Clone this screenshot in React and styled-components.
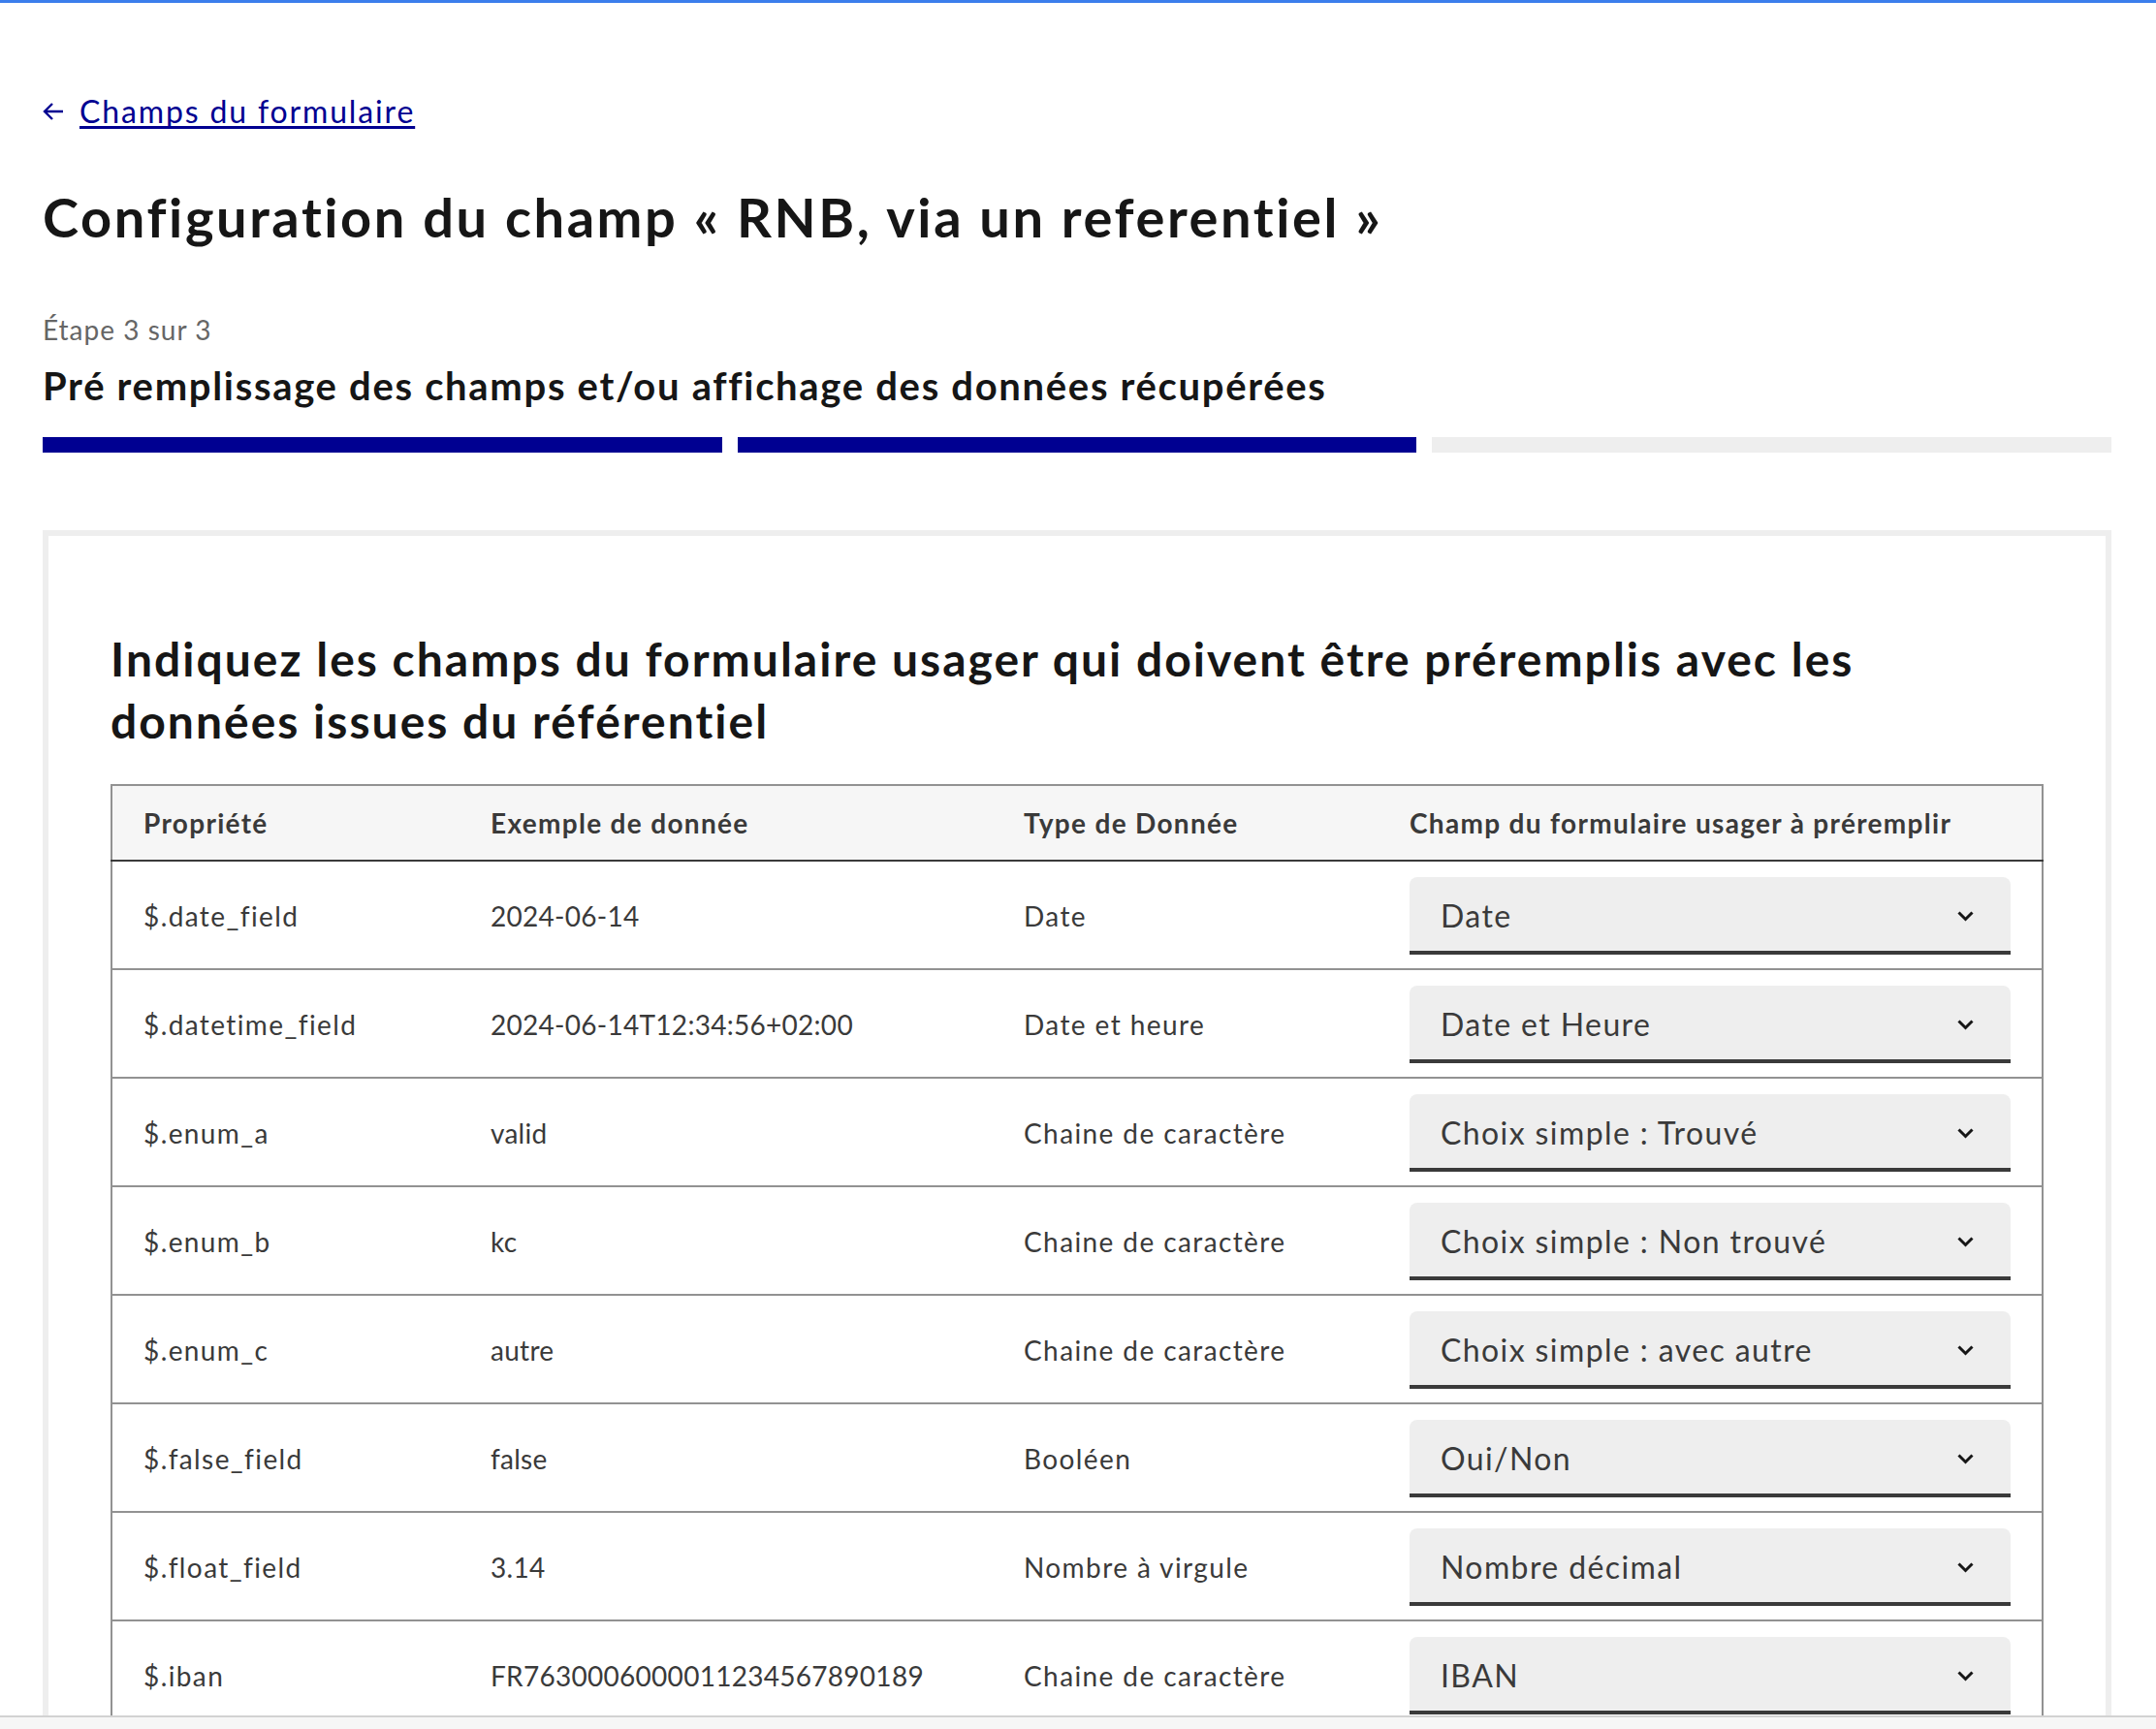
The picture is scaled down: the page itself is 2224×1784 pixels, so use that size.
import React from "react";
import styled, { createGlobalStyle } from "styled-components";

const rows = [
  { prop: "$.date_field", sample: "2024-06-14", type: "Date", field: "Date" },
  { prop: "$.datetime_field", sample: "2024-06-14T12:34:56+02:00", type: "Date et heure", field: "Date et Heure" },
  { prop: "$.enum_a", sample: "valid", type: "Chaine de caractère", field: "Choix simple : Trouvé" },
  { prop: "$.enum_b", sample: "kc", type: "Chaine de caractère", field: "Choix simple : Non trouvé" },
  { prop: "$.enum_c", sample: "autre", type: "Chaine de caractère", field: "Choix simple : avec autre" },
  { prop: "$.false_field", sample: "false", type: "Booléen", field: "Oui/Non" },
  { prop: "$.float_field", sample: "3.14", type: "Nombre à virgule", field: "Nombre décimal" },
  { prop: "$.iban", sample: "FR7630006000011234567890189", type: "Chaine de caractère", field: "IBAN" },
];

const GlobalStyle = createGlobalStyle`
  body {
    margin: 0;
    background: #fff;
    color: #161616;
    font-family: Lato, "Noto Sans", sans-serif;
    letter-spacing: 0.05em;
  }
`;

const TopLine = styled.div`
  height: 3px;
  background: #3b7eec;
`;

const Page = styled.main`
  padding: 88px 46px 0 44px;
`;

const BackLink = styled.a`
  display: inline-flex;
  align-items: center;
  gap: 16px;
  font-size: 32px;
  line-height: 48px;
  color: #000091;
  letter-spacing: 0.058em;
  text-decoration: underline;
  text-decoration-thickness: 3px;
  text-underline-offset: 3px;
  text-decoration-skip-ink: none;
  cursor: pointer;
`;

const Title = styled.h1`
  margin: 49px 0 0;
  font-size: 56px;
  line-height: 72px;
  font-weight: 700;
  letter-spacing: 0.046em;
`;

const StepState = styled.p`
  margin: 60px 0 0;
  font-size: 28px;
  line-height: 40px;
  color: #666;
  letter-spacing: 0.036em;
`;

const StepTitle = styled.h2`
  margin: 10px 0 0;
  font-size: 40px;
  line-height: 56px;
  font-weight: 700;
  letter-spacing: 0.042em;
`;

const Steps = styled.div`
  display: grid;
  grid-template-columns: repeat(3, 1fr);
  gap: 16px;
  margin-top: 25px;
`;

const Step = styled.div`
  height: 16px;
  background: ${(p) => (p.$done ? "#000091" : "#eee")};
`;

const Card = styled.section`
  margin-top: 80px;
  border: 6px solid #eee;
  padding: 95px 64px 0;
`;

const CardTitle = styled.h3`
  margin: 0 0 33px;
  max-width: 1880px;
  font-size: 48px;
  line-height: 64px;
  font-weight: 700;
  letter-spacing: 0.042em;
`;

const Table = styled.table`
  width: 100%;
  border-collapse: collapse;
  table-layout: fixed;
  border: 2px solid #929292;
  color: #3a3a3a;
  font-size: 28px;
  line-height: 40px;
`;

const HeadRow = styled.tr`
  background: #f6f6f6;
  border-bottom: 2px solid #3a3a3a;
`;

const Th = styled.th`
  padding: 18px 32px;
  text-align: left;
  font-weight: 700;
  letter-spacing: 0.047em;
`;

const Row = styled.tr`
  border-bottom: 2px solid #929292;
`;

const Td = styled.td`
  padding: 16px 32px 14px;
  vertical-align: middle;
  white-space: nowrap;
  letter-spacing: ${(p) => (p.$sample ? "0.01em" : "0.05em")};
`;

const SelectBox = styled.div`
  display: flex;
  align-items: center;
  justify-content: space-between;
  height: 80px;
  padding: 0 38px 0 32px;
  background: #eee;
  border-radius: 8px 8px 0 0;
  box-shadow: inset 0 -4px 0 0 #3a3a3a;
  font-size: 32px;
  color: #3a3a3a;
`;

const BottomBar = styled.div`
  position: fixed;
  left: 0;
  right: 0;
  bottom: 0;
  height: 12px;
  background: #f6f6f6;
  border-top: 2px solid #d2d2d2;
`;

function ArrowLeft() {
  return (
    <svg width="22" height="20" viewBox="0 0 22 20" fill="none" stroke="#000091" strokeWidth="2.4">
      <path d="M21 10H2M10 2L2 10l8 8" />
    </svg>
  );
}

function Chevron() {
  return (
    <svg width="17" height="11" viewBox="0 0 17 11" fill="none" stroke="#161616" strokeWidth="3">
      <path d="M1.5 1.5l7 7 7-7" />
    </svg>
  );
}

export default function App() {
  return (
    <>
      <GlobalStyle />
      <TopLine />
      <Page>
        <BackLink>
          <ArrowLeft />
          Champs du formulaire
        </BackLink>
        <Title>Configuration du champ « RNB, via un referentiel »</Title>
        <StepState>Étape 3 sur 3</StepState>
        <StepTitle>Pré remplissage des champs et/ou affichage des données récupérées</StepTitle>
        <Steps>
          <Step $done />
          <Step $done />
          <Step />
        </Steps>
        <Card>
          <CardTitle>
            Indiquez les champs du formulaire usager qui doivent être préremplis avec les données issues du
            référentiel
          </CardTitle>
          <Table>
            <colgroup>
              <col style={{ width: 359 }} />
              <col style={{ width: 550 }} />
              <col style={{ width: 398 }} />
              <col />
            </colgroup>
            <thead>
              <HeadRow>
                <Th>Propriété</Th>
                <Th>Exemple de donnée</Th>
                <Th>Type de Donnée</Th>
                <Th>Champ du formulaire usager à préremplir</Th>
              </HeadRow>
            </thead>
            <tbody>
              {rows.map((r) => (
                <Row key={r.prop}>
                  <Td>{r.prop}</Td>
                  <Td $sample>{r.sample}</Td>
                  <Td>{r.type}</Td>
                  <Td>
                    <SelectBox>
                      {r.field}
                      <Chevron />
                    </SelectBox>
                  </Td>
                </Row>
              ))}
            </tbody>
          </Table>
        </Card>
      </Page>
      <BottomBar />
    </>
  );
}
